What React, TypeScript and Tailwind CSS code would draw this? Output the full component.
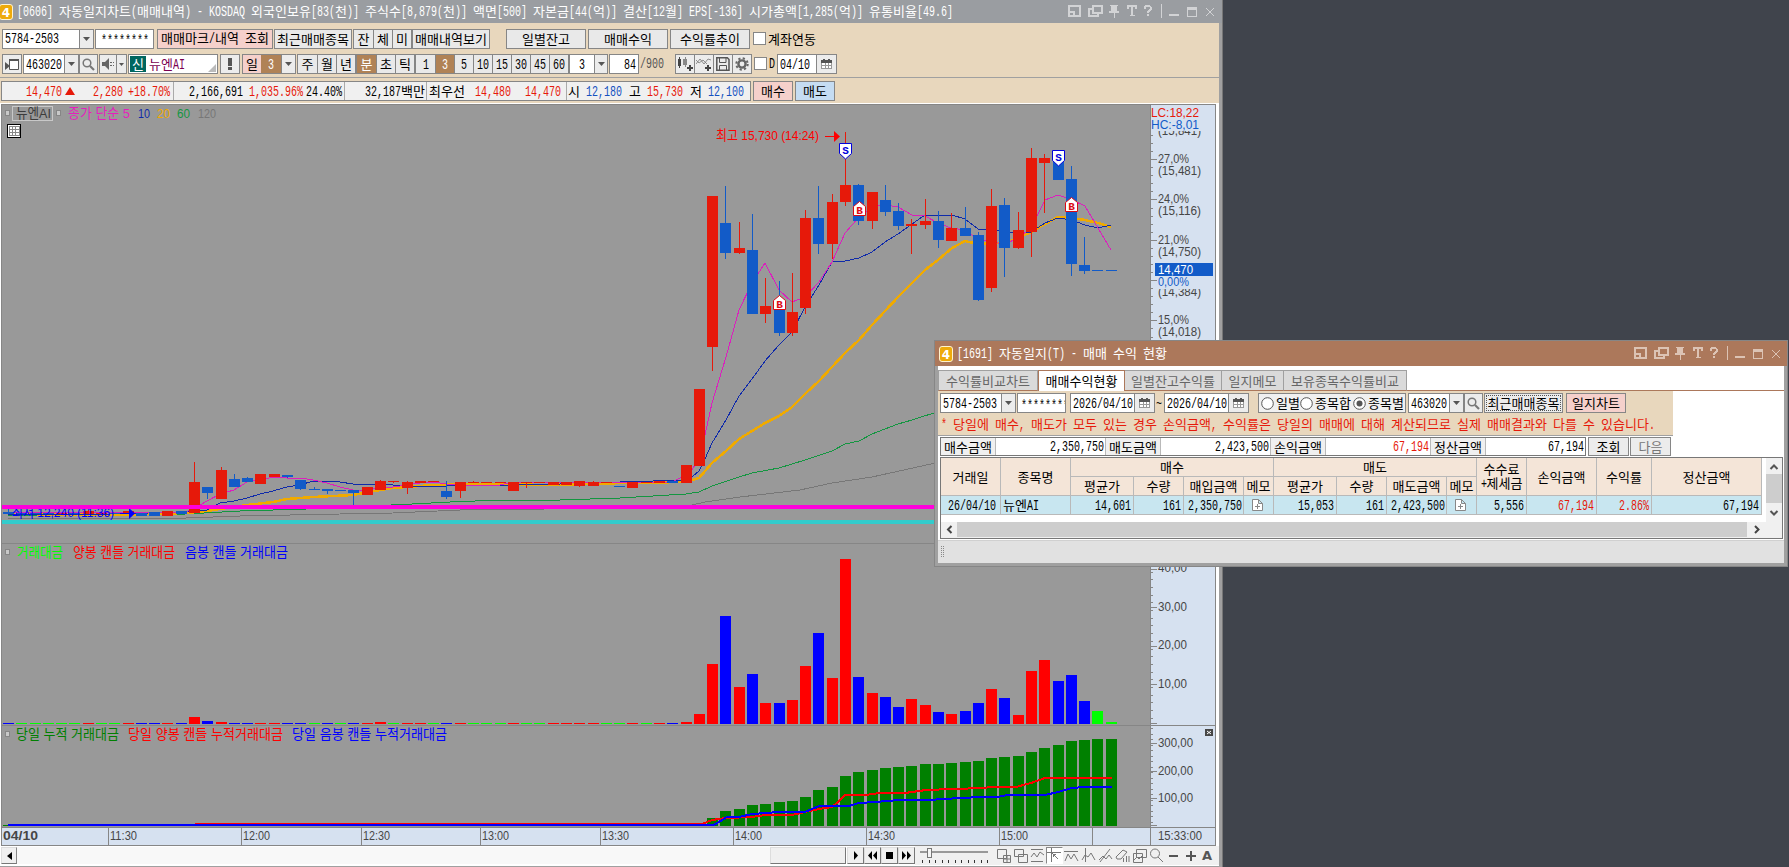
import { Fragment, type ReactNode } from "react";
import clsx from "clsx";

type Dir = "up" | "down";

const UP = "#e6190a";
const DOWN = "#125bc8";

const STEP = 13.285;
const cx = (i: number) => Math.round(8 + STEP * i);

// [direction, body top, body bottom, wick top, wick bottom]
const candles: [Dir, number, number, number, number][] = [
  ["down", 512, 514, 509, 514],
  ["down", 513, 514, 513, 514],
  ["down", 513, 514, 513, 514],
  ["down", 513, 514, 513, 514],
  ["up", 513, 514, 513, 514],
  ["down", 513, 514, 513, 514],
  ["up", 511, 514, 510, 514],
  ["up", 513, 514, 513, 514],
  ["down", 513, 514, 513, 514],
  ["up", 511, 514, 511, 514],
  ["down", 513, 516, 513, 516],
  ["down", 512, 516, 512, 516],
  ["up", 511, 516, 511, 516],
  ["down", 511, 514, 511, 514],
  ["up", 482, 513, 462, 513],
  ["down", 487, 493, 487, 499],
  ["up", 470, 499, 467, 499],
  ["down", 479, 487, 474, 487],
  ["down", 478, 482, 477, 482],
  ["up", 474, 484, 474, 484],
  ["up", 474, 477, 474, 477],
  ["down", 475, 477, 475, 478],
  ["down", 480, 489, 480, 490],
  ["down", 489, 490, 487, 490],
  ["down", 489, 491, 489, 494],
  ["down", 490, 491, 490, 491],
  ["down", 490, 493, 490, 505],
  ["up", 487, 495, 487, 495],
  ["up", 481, 490, 480, 490],
  ["up", 481, 482, 481, 483],
  ["up", 482, 488, 481, 494],
  ["up", 481, 483, 481, 483],
  ["up", 481, 482, 481, 482],
  ["down", 491, 497, 481, 499],
  ["up", 482, 491, 482, 498],
  ["up", 482, 483, 481, 483],
  ["up", 482, 483, 482, 483],
  ["up", 482, 483, 482, 483],
  ["up", 482, 491, 482, 491],
  ["up", 482, 483, 482, 488],
  ["up", 482, 483, 482, 483],
  ["up", 482, 485, 482, 485],
  ["up", 482, 485, 482, 485],
  ["up", 481, 486, 481, 487],
  ["up", 482, 486, 481, 486],
  ["up", 482, 483, 482, 483],
  ["down", 486, 487, 486, 487],
  ["up", 482, 488, 482, 488],
  ["up", 482, 483, 482, 483],
  ["up", 481, 483, 481, 483],
  ["down", 481, 483, 481, 483],
  ["up", 465, 483, 465, 483],
  ["up", 389, 466, 389, 466],
  ["up", 196, 347, 196, 371],
  ["down", 223, 253, 186, 259],
  ["up", 248, 253, 222, 254],
  ["down", 250, 314, 214, 314],
  ["up", 306, 314, 278, 323],
  ["down", 305, 333, 281, 336],
  ["up", 312, 333, 273, 336],
  ["up", 218, 308, 210, 314],
  ["down", 218, 244, 186, 254],
  ["up", 202, 244, 194, 259],
  ["up", 185, 202, 132, 206],
  ["down", 185, 221, 184, 225],
  ["up", 192, 221, 192, 229],
  ["down", 200, 212, 185, 216],
  ["down", 211, 226, 203, 230],
  ["up", 224, 226, 219, 254],
  ["up", 221, 225, 199, 229],
  ["down", 221, 240, 211, 248],
  ["up", 228, 241, 213, 241],
  ["down", 228, 236, 207, 236],
  ["down", 235, 300, 232, 301],
  ["up", 206, 288, 189, 292],
  ["down", 205, 248, 198, 277],
  ["up", 230, 248, 212, 249],
  ["up", 158, 232, 148, 257],
  ["up", 158, 163, 154, 213],
  ["down", 158, 180, 158, 180],
  ["down", 179, 264, 166, 276],
  ["down", 265, 271, 237, 274],
  ["down", 270, 271, 270, 271],
  ["down", 270, 271, 270, 271],
];

// r = rising, b = falling, g = unchanged
const volumeTone =
  "bgggggrggrbbrb" + "rbrbbrrbbgbgbrrgrrgbrgggrggrrrrggrgrb" + "rrrbrbrbrrbrrbrbbrrbrbbrbrrrbbbgg";
const volumeFill: Record<string, string> = { r: "#ff0000", b: "#0000ff", g: "#00ff00" };
const volumeTop: Record<number, number> = {
  14: 717, 15: 721, 16: 722, 28: 722, 51: 722, 52: 714, 53: 664, 54: 616, 55: 687, 56: 674,
  57: 703, 58: 703, 59: 700, 60: 666, 61: 633, 62: 678, 63: 559, 64: 677, 65: 693, 66: 697,
  67: 707, 68: 699, 69: 705, 70: 712, 71: 714, 72: 711, 73: 703, 74: 689, 75: 698, 76: 715,
  77: 671, 78: 660, 79: 681, 80: 675, 81: 701, 82: 711, 83: 722,
};

const cumulativeTop = [
  818, 811, 809, 805, 804, 802, 801, 797, 790, 787, 776, 772, 770, 768, 767, 766, 764, 764, 763,
  762, 761, 758, 757, 756, 752, 748, 745, 741, 740, 739, 739,
];

const ma = {
  ma5: "8,512 150,512 186,512 195,508 207,501 220,494 234,490 247,482 260,480 273,477 287,478 300,478 313,480 327,483 340,487 353,490 367,490 380,487 393,487 407,485 420,483 433,482 446,484 460,485 500,485 513,482 672,482 686,475 692,470 699,458 705,435 712,403 726,357 739,310 752,283 765,263 779,290 792,302 805,297 819,282 832,262 845,233 859,217 872,207 885,205 898,207 912,215 925,216 938,223 951,228 965,230 978,239 991,242 1005,244 1018,238 1031,228 1038,214 1045,200 1058,195 1072,200 1085,206 1098,228 1111,250",
  ma10: "8,515 110,514 186,512 207,510 220,503 234,501 247,498 260,494 273,491 287,487 300,485 313,481 340,482 353,484 390,484 393,485 407,486 446,486 460,485 513,485 526,484 560,484 580,482 620,482 686,480 692,477 699,471 705,459 712,443 726,420 739,396 752,379 765,361 779,345 792,332 805,307 819,285 832,262 845,261 859,258 872,252 885,242 898,234 912,224 925,215 938,216 952,215 965,219 978,229 991,229 1005,232 1018,233 1031,232 1045,223 1058,218 1072,220 1085,225 1098,228 1111,225",
  ma20: "8,514 120,515 186,513 207,511 220,509 247,505 273,502 287,499 313,497 353,495 380,490 393,488 407,487 433,485 460,484 513,484 540,485 600,484 620,483 686,482 699,478 712,463 726,451 739,439 752,431 765,423 779,416 792,407 805,394 819,381 832,367 845,353 859,340 872,325 885,311 898,297 912,283 925,270 938,260 952,248 965,241 978,244 991,243 1005,243 1018,238 1031,232 1045,224 1058,217 1072,218 1085,220 1098,223 1111,227",
  ma60: "8,516 100,515 186,514 240,511 307,509 412,504 450,502 500,500 560,500 620,498 686,494 699,492 712,486 739,477 752,473 779,468 805,460 832,451 845,444 859,441 872,434 898,424 912,420 940,411",
  ma120: "8,518 186,518 240,516 340,514 393,513 460,510 545,509 692,505 705,502 740,497 800,490 832,483 872,477 940,462",
};

const cumUp =
  "195,824 702,824 712,820 726,818 752,817 765,815 792,815 805,812 819,809 832,807 839,801 845,795 865,795 880,793 905,793 926,790 953,789 984,788 991,787 1016,787 1031,783 1045,778 1112,778";
const cumDown =
  "8,825 714,825 727,817 739,817 752,814 779,812 805,812 819,806 849,806 859,803 875,802 899,800 932,800 940,799 965,798 978,797 998,797 1007,795 1045,795 1058,792 1072,788 1085,787 1112,787";

const range = (n: number) => Array.from({ length: n }, (_, i) => i);

/* Fixed pitch text: 6px for a half width character, 12px for a full width one */
function G({ children, className }: { children: string; className?: string }) {
  const runs = children.match(/[\u3130-\ud7a3]+|[^\u3130-\ud7a3]+/g) ?? [];
  return (
    <span className={clsx("inline-flex shrink-0 whitespace-pre leading-4", className)}>
      {runs.map((run, i) =>
        /[\u3130-\ud7a3]/.test(run) ? (
          <span key={i} className="tracking-[0.04px]">
            {run}
          </span>
        ) : (
          <span key={i} className="inline-block" style={{ width: run.length * 6 }}>
            <span className="inline-block origin-left scale-x-[0.6452] font-['Liberation_Mono',monospace] text-[15.5px]">
              {run}
            </span>
          </span>
        ),
      )}
    </span>
  );
}

function Box({ className, children }: { className?: string; children?: ReactNode }) {
  return (
    <div
      className={clsx(
        "flex h-5 shrink-0 items-center justify-center overflow-hidden border border-[#868686]",
        className,
      )}
    >
      {children}
    </div>
  );
}

function Arrow({ className }: { className?: string }) {
  return (
    <div
      className={clsx(
        "flex h-full shrink-0 items-center justify-center border-l border-[#868686] bg-[#ececec]",
        className,
      )}
    >
      <svg width="7" height="4">
        <path d="M0 0h7L3.5 4z" fill="#555" />
      </svg>
    </div>
  );
}

function CalendarIcon() {
  return (
    <svg width="11" height="11" shapeRendering="crispEdges">
      <path d="M0 1h11v9H0z" fill="#fff" />
      <path d="M.5 4v6M10.500 4v6M0 9.500h11M4 4v6M7.500 4v6M1 6.500h9" fill="none" stroke="#999" />
      <path d="M0 1h11v3H0zM2 0h2v1H2zM7 0h2v1H7z" fill="#555" />
    </svg>
  );
}

function SearchIcon() {
  return (
    <svg width="13" height="13" fill="none" stroke="#777">
      <circle cx="5" cy="5" r="3.800" strokeWidth="1.500" />
      <path d="M8 8l4 4" strokeWidth="2.200" />
    </svg>
  );
}

function Toggle({ labels, active, widths }: { labels: string[]; active?: string; widths: string }) {
  return (
    <div className="flex h-5 shrink-0 border border-[#868686]">
      {labels.map((label, i) => (
        <div
          key={label}
          className={clsx(
            "flex items-center justify-center",
            widths,
            i > 0 && "border-l border-[#868686]",
            label === active ? "bg-[#b08256] text-white" : "bg-[#e9e9e9]",
          )}
        >
          <G>{label}</G>
        </div>
      ))}
    </div>
  );
}

function WindowButtons({ color }: { color: string }) {
  return (
    <svg width="148" height="16" fill="none" stroke={color} shapeRendering="crispEdges">
      <path d="M1 2h11v10H1zM1 8h5v4" strokeWidth="1.600" />
      <path d="M25 2h9v7h-9zM24 5h-3v7h9v-2" strokeWidth="1.500" />
      <path d="M42 1h8v1h-1v5h2v2h-4v5h-1v-5h-5V7h2V2h-1z" fill={color} stroke="none" />
      <path d="M59 1h10v4h-1.500l-.5-2h-2v8h1.500v1h-5v-1H63V3h-2l-.5 2H59z" fill={color} stroke="none" />
      <path d="M76.500 4.500V3l1.500-1.500h3L82.500 3v2.500L80 7.500V9M79 11h2" strokeWidth="2" />
      <path d="M93.500 0v14" />
      <path d="M101 11h10" strokeWidth="2" />
      <path d="M119.500 3v9h9V3" />
      <path d="M119 4h10" strokeWidth="3" />
      <path d="M138 4l8 8M146 4l-8 8" shapeRendering="auto" />
    </svg>
  );
}

function TitleIcon() {
  return (
    <svg width="14" height="16" className="shrink-0">
      <rect x=".5" y=".5" width="13" height="15" rx="2.500" fill="#eeaa0a" stroke="#fff3d0" />
      <text
        x="7"
        y="12.500"
        textAnchor="middle"
        fill="#fff"
        className="font-['DejaVu_Sans',sans-serif] text-[12px] font-bold"
      >
        4
      </text>
    </svg>
  );
}

function Toolbar() {
  const btn = "bg-[#e9e9e9]";
  return (
    <div className="h-20 w-[1219px] bg-[#e8d7bd] text-black">
      <div className="flex h-[31px] items-center pl-[2px]">
        <Box className="w-[92px] justify-between! bg-white">
          <G className="pl-[2px]">5784-2503</G>
          <Arrow className="w-[14px]" />
        </Box>
        <Box className="ml-px w-[59px] bg-white pt-1">
          <G>********</G>
        </Box>
        <Box className="ml-[3px] w-[116px] bg-[#f5d0cb]">
          <G>매매마크/내역 조회</G>
        </Box>
        <Box className={clsx("ml-px w-[78px]", btn)}>
          <G>최근매매종목</G>
        </Box>
        <div className="ml-px">
          <Toggle labels={["잔", "체", "미"]} widths="w-[19px]" />
        </div>
        <Box className={clsx("w-[78px]", btn)}>
          <G>매매내역보기</G>
        </Box>
        <Box className={clsx("ml-[16px] w-[80px]", btn)}>
          <G>일별잔고</G>
        </Box>
        <Box className={clsx("ml-[2px] w-[80px]", btn)}>
          <G>매매수익</G>
        </Box>
        <Box className={clsx("ml-[2px] w-[80px]", btn)}>
          <G>수익률추이</G>
        </Box>
        <div className="ml-[3px] mr-[2px] size-[13px] border border-[#868686] bg-white" />
        <G>계좌연동</G>
      </div>

      <div className="flex h-[23px] items-end pb-[3px] pl-[2px]">
        <Box className="w-5 bg-[#ececec]">
          <svg width="14" height="13">
            <path d="M4.500 1.500h9v10h-9z" fill="#fff" stroke="#555" />
            <path d="M4 1h10v2H4zM0 4l5 4-5 4z" fill="#555" />
          </svg>
        </Box>
        <Box className="ml-px w-[56px] justify-between! bg-white">
          <G className="pl-[2px]">463020</G>
          <Arrow className="w-[14px]" />
        </Box>
        <Box className="w-[19px] bg-[#ececec]">
          <SearchIcon />
        </Box>
        <Box className="ml-px w-[18px] bg-[#ececec]">
          <svg width="13" height="12" fill="#666">
            <path d="M0 4h3l4-4v12L3 8H0z" />
            <path d="M8 4h2v1H8zM11 4h1v1h-1zM8 7h2v1H8zM11 7h1v1h-1z" />
          </svg>
        </Box>
        <Box className="-ml-px w-[11px] bg-[#ececec]">
          <svg width="5" height="3">
            <path d="M0 0h5L2.500 3z" fill="#555" />
          </svg>
        </Box>
        <Box className="relative ml-px w-[90px] justify-start! bg-white pl-px">
          <span className="flex h-4 w-4 items-center justify-center bg-[#00665f] text-white">
            <G>신</G>
          </span>
          <G className="pl-[3px] text-[#7a0050]">뉴엔AI</G>
          <svg width="8" height="8" className="absolute right-px bottom-px">
            <path d="M8 0v8H0z" fill="#bbb" />
          </svg>
        </Box>
        <Box className="ml-[2px] w-5 bg-[#ececec]">
          <svg width="4" height="12" fill="#555">
            <path d="M0 0h4v8H0zM0 9h4v3H0z" />
          </svg>
        </Box>
        <Box className="ml-[2px] w-[54px]">
          <span className="flex h-full w-[18px] items-center justify-center bg-[#f5d0cb]">
            <G>일</G>
          </span>
          <span className="flex h-full w-5 items-center justify-center bg-[#b08256] text-white">
            <G>3</G>
          </span>
          <Arrow className="w-[14px]" />
        </Box>
        <div className="ml-px">
          <Toggle labels={["주", "월", "년"]} widths="w-[19px]" />
        </div>
        <Toggle labels={["분", "초", "틱"]} active="분" widths="w-[19px]" />
        <Toggle
          labels={["1", "3", "5", "10", "15", "30", "45", "60"]}
          active="3"
          widths="w-[19px]"
        />
        <Box className="w-[39px] bg-white">
          <G className="flex-1 justify-center">3</G>
          <Arrow className="w-[13px]" />
        </Box>
        <Box className="ml-px w-[30px] justify-end! bg-white pr-[2px]">
          <G>84</G>
        </Box>
        <G className="mb-[2px] ml-px text-[#555]">/900</G>
        <div className="ml-[11px] flex">
          <Box className="w-5 bg-[#ececec]">
            <svg width="16" height="15" fill="#444">
              <path d="M1 2h3v7H1zM2 0h1v11H2z" />
              <path d="M6 2h4v6H6zM8 0h1v10H8z" fill="#888" />
              <path d="M12 8h2v2h2v2h-2v2h-2v-2h-2v-2h2z" />
            </svg>
          </Box>
          <Box className="-ml-px w-5 bg-[#ececec]">
            <svg width="16" height="15" fill="none" stroke="#777">
              <path d="M0 7l4-5 4 5 4-5 3 1M0 3l3 3 4-3 4 4" strokeWidth=".8" />
              <path d="M12 8v6M9 11h6" stroke="#444" strokeWidth="2" />
            </svg>
          </Box>
          <Box className="-ml-px w-5 bg-[#ececec]">
            <svg width="14" height="14" fill="none" stroke="#555">
              <path d="M.8.8h10.500L13 2.500v10.700H.8z" strokeWidth="1.500" />
              <path d="M3.500 1v4.500h6.500V1M3.500 13V8.500h7V13" />
            </svg>
          </Box>
          <Box className="-ml-px w-5 bg-[#ececec]">
            <svg width="14" height="14" fill="none" stroke="#666">
              <circle cx="7" cy="7" r="3.600" strokeWidth="2.400" />
              <circle cx="7" cy="7" r="5.700" strokeWidth="2" strokeDasharray="2.200 2.280" />
            </svg>
          </Box>
        </div>
        <div className="mr-[2px] mb-[4px] ml-[2px] size-[13px] border border-[#868686] bg-white" />
        <G className="mb-[2px] w-[8px]">D</G>
        <Box className="w-[60px] justify-between! bg-white">
          <G className="pl-[2px]">04/10</G>
          <span className="flex h-full w-[20px] items-center justify-center border-l border-[#868686] bg-[#ececec]">
            <CalendarIcon />
          </span>
        </Box>
      </div>

      <div className="h-px bg-[#a0a0a0]" />

      <div className="mt-[3px] flex pl-px">
        <div className="flex h-5 w-[750px] items-center border border-[#868686] bg-[#f0f0f0] text-[#e6190a]">
          <div className="flex h-full w-[172px] items-center border-r border-[#aaa]">
            <G className="w-[60px] justify-end">14,470</G>
            <svg width="10" height="8" className="ml-[3px]">
              <path d="M5 0l5 8H0z" fill={UP} />
            </svg>
            <G className="ml-[18px]">2,280</G>
            <G className="ml-[5px]">+18.70%</G>
          </div>
          <div className="flex h-full w-[171px] items-center border-r border-[#aaa]">
            <G className="ml-[15px] text-black">2,166,691</G>
            <G className="ml-[6px]">1,035.96%</G>
            <G className="ml-[3px] text-black">24.40%</G>
          </div>
          <div className="flex h-full w-[82px] items-center justify-end border-r border-[#aaa] pr-px text-black">
            <G>32,187백만</G>
          </div>
          <div className="flex h-full w-[140px] items-center border-r border-[#aaa] pl-[2px]">
            <G className="text-black">최우선</G>
            <G className="ml-[10px]">14,480</G>
            <G className="ml-[14px]">14,470</G>
          </div>
          <G className="ml-px text-black">시</G>
          <G className="ml-[6px] text-[#1450c0]">12,180</G>
          <G className="ml-[7px] text-black">고</G>
          <G className="ml-[6px]">15,730</G>
          <G className="ml-[7px] text-black">저</G>
          <G className="ml-[6px] text-[#1450c0]">12,100</G>
        </div>
        <Box className="ml-[2px] w-[40px] bg-[#f5d0cb]">
          <G>매수</G>
        </Box>
        <Box className="ml-[2px] w-[40px] bg-[#c5dcf2]">
          <G>매도</G>
        </Box>
      </div>
    </div>
  );
}

interface LabelProps {
  x: number;
  y: number;
  w: number;
  fill?: string;
  bold?: boolean;
  children: string;
}

function Label({ x, y, w, fill = "#464646", bold, children }: LabelProps) {
  return (
    <text
      x={x}
      y={y}
      fill={fill}
      textLength={w}
      lengthAdjust="spacingAndGlyphs"
      fontWeight={bold ? 700 : undefined}
    >
      {children}
    </text>
  );
}

function Marker({ x, y, side }: { x: number; y: number; side: "B" | "S" }) {
  const buy = side === "B";
  const color = buy ? "#dc0a14" : "#0000dc";
  return (
    <g transform={`translate(${x} ${y})`}>
      <path
        d={buy ? "M.5 5.500L6.500.5l6 5v9H.5z" : "M.5.5h12v10l-6 5.500-6-5.500z"}
        fill="#fff"
        stroke={color}
      />
      <text
        x="6.500"
        y={buy ? 13 : 11}
        textAnchor="middle"
        fill={color}
        className="font-['Liberation_Mono',monospace] text-[11px] font-bold"
      >
        {side}
      </text>
    </g>
  );
}

function Chart() {
  const percents: [number, string, string][] = [
    [159, "27,0%", "(15,481)"],
    [199, "24,0%", "(15,116)"],
    [240, "21,0%", "(14,750)"],
    [320, "15,0%", "(14,018)"],
  ];
  const times: [number, string][] = [
    [108, "11:30"],
    [241, "12:00"],
    [361, "12:30"],
    [480, "13:00"],
    [600, "13:30"],
    [733, "14:00"],
    [866, "14:30"],
    [999, "15:00"],
  ];
  const maLines: [string, string, number][] = [
    [ma.ma120, "#777777", 1],
    [ma.ma60, "#149641", 1],
    [ma.ma20, "#f0aa00", 2.500],
    [ma.ma10, "#0f2aaa", 1],
    [ma.ma5, "#dc1ebe", 1],
  ];

  return (
    <svg
      width="1219"
      height="743"
      viewBox="0 103 1219 743"
      className="block bg-white font-['Liberation_Sans','Noto_Sans_CJK_KR',sans-serif] text-[13.5px]"
    >
      <defs>
        <clipPath id="topLabel">
          <rect x="1151" y="131" width="60" height="10" />
        </clipPath>
        <clipPath id="midLabel">
          <rect x="1151" y="289" width="60" height="14" />
        </clipPath>
      </defs>
      <g shapeRendering="crispEdges">
        <rect x="1" y="104" width="1215" height="742" fill="#868686" />
        <rect x="2" y="105" width="1148" height="722" fill="#999999" />
        <rect x="1151" y="105" width="64" height="722" fill="#d6e1f0" />
        <rect x="2" y="828" width="1213" height="17" fill="#d6e1f0" />
        <rect x="2" y="543" width="1213" height="1" fill="#868686" />
        <rect x="2" y="725" width="1213" height="1" fill="#868686" />
      </g>

      {maLines.map(([points, stroke, width]) => (
        <polyline
          key={stroke}
          points={points}
          fill="none"
          stroke={stroke}
          strokeWidth={width}
          shapeRendering="crispEdges"
        />
      ))}

      <g shapeRendering="crispEdges">
        {candles.map(([dir, top, bottom, high, low], i) => (
          <g key={i} fill={dir === "up" ? UP : DOWN}>
            <rect x={cx(i)} y={high} width="1" height={low - high} />
            <rect x={cx(i) - 5} y={top} width="11" height={bottom - top} />
          </g>
        ))}
      </g>

      <Label x={12} y={517} w={102} fill="#0000ff">
        최저 12,240 (11:36)
      </Label>
      <path d="M120 513.500h10" stroke="#0000ff" />
      <path d="M129 508l6 5.500-6 5.500z" fill="#0000ff" />
      <rect x="2" y="505" width="1148" height="4" fill="#ff00dc" />
      <rect x="2" y="520" width="1148" height="4" fill="#33cccc" />

      <Label x={716} y={140} w={103} fill="#ff0000">
        최고 15,730 (14:24)
      </Label>
      <path d="M825 136.500h10" stroke="#ff0000" />
      <path d="M834 131l6 5.500-6 5.500z" fill="#ff0000" />

      <Marker x={839} y={143} side="S" />
      <Marker x={853} y={201} side="B" />
      <Marker x={773} y={295} side="B" />
      <Marker x={1052} y={150} side="S" />
      <Marker x={1065} y={197} side="B" />

      {/* legends */}
      <g fill="#c8c8c8" stroke="#868686">
        <rect x="5.500" y="110.500" width="4" height="5" />
        <rect x="56.500" y="110.500" width="4" height="5" />
        <rect x="5.500" y="549.500" width="4" height="5" />
        <rect x="5.500" y="731.500" width="4" height="5" />
        <rect x="12.500" y="106.500" width="40" height="14" fill="none" stroke="#c8c8c8" />
      </g>
      <Label x={16} y={118} w={35} fill="#3c3c3c">
        뉴엔AI
      </Label>
      <Label x={68} y={118} w={62} fill="#e61ebe">
        종가 단순 5
      </Label>
      <Label x={138} y={118} w={12} fill="#0f2aaa">
        10
      </Label>
      <Label x={157} y={118} w={13} fill="#f0aa00">
        20
      </Label>
      <Label x={177} y={118} w={13} fill="#149641">
        60
      </Label>
      <Label x={198} y={118} w={18} fill="#777">
        120
      </Label>
      <g shapeRendering="crispEdges">
        <rect x="7.500" y="124.500" width="13" height="13" fill="#fff" stroke="#000" />
        <path d="M9 126.500h10v9H9zM9 129.500h10M9 132.500h10M12.500 127v9M15.500 127v9" fill="none" stroke="#888" />
      </g>

      <Label x={17} y={557} w={46} fill="#00ff00">
        거래대금
      </Label>
      <Label x={73} y={557} w={102} fill="#ff0000">
        양봉 캔들 거래대금
      </Label>
      <Label x={185} y={557} w={103} fill="#0000ff">
        음봉 캔들 거래대금
      </Label>

      <Label x={16} y={739} w={103} fill="#008000">
        당일 누적 거래대금
      </Label>
      <Label x={128} y={739} w={155} fill="#ff0000">
        당일 양봉 캔들 누적거래대금
      </Label>
      <Label x={292} y={739} w={155} fill="#0000ff">
        당일 음봉 캔들 누적거래대금
      </Label>

      {/* trading value and accumulated value */}
      <g shapeRendering="crispEdges">
        {volumeTone.split("").map((tone, i) => {
          const top = volumeTop[i] ?? 723;
          return (
            <rect
              key={i}
              x={cx(i) - 5}
              y={top}
              width="11"
              height={724 - top}
              fill={volumeFill[tone]}
            />
          );
        })}
        {cumulativeTop.map((top, i) => (
          <rect key={i} x={cx(i + 53) - 5} y={top} width="11" height={826 - top} fill="#008000" />
        ))}
        <rect x="3" y="825" width="6" height="1" fill="#008000" />
        <polyline points={cumUp} fill="none" stroke="#ff0000" strokeWidth="2" />
        <polyline points={cumDown} fill="none" stroke="#0000ff" strokeWidth="2" />
      </g>

      {/* right axis */}
      <g fill="#868686" shapeRendering="crispEdges">
        {range(26).map((i) => (
          <rect key={i} x="1151" y={Math.round(135 + i * 8.06)} width="2" height="1" />
        ))}
        {[159, 199, 240, 280, 320, 569, 607, 646, 684, 723, 743, 771, 798, 825].map((y) => (
          <rect key={y} x="1151" y={y} width="6" height="1" />
        ))}
        {range(20).map((i) => (
          <rect key={i} x="1151" y={Math.round(571.500 + i * 7.700)} width="2" height="1" />
        ))}
        {range(18).map((i) => (
          <rect key={i} x="1151" y={Math.round(728 + i * 5.500)} width="2" height="1" />
        ))}
      </g>
      <Label x={1151} y={117} w={48} fill={UP}>
        LC:18,22
      </Label>
      <Label x={1151} y={129} w={48} fill={DOWN}>
        HC:-8,01
      </Label>
      <g clipPath="url(#topLabel)">
        <Label x={1158} y={135} w={43}>
          (15,841)
        </Label>
      </g>
      {percents.map(([y, percent, price]) => (
        <Fragment key={y}>
          <Label x={1158} y={y + 4} w={31}>
            {percent}
          </Label>
          <Label x={1158} y={y + 16} w={43}>
            {price}
          </Label>
        </Fragment>
      ))}
      <rect x="1155" y="263" width="58" height="13" fill={DOWN} />
      <Label x={1158} y={274} w={35} fill="#ffffff">
        14,470
      </Label>
      <Label x={1158} y={286} w={31} fill={DOWN}>
        0,00%
      </Label>
      <g clipPath="url(#midLabel)">
        <Label x={1158} y={296} w={43}>
          (14,384)
        </Label>
      </g>
      {["40,00", "30,00", "20,00", "10,00"].map((t, i) => (
        <Label key={t} x={1158} y={Math.round(572 + i * 38.500)} w={29}>
          {t}
        </Label>
      ))}
      {["300,00", "200,00", "100,00"].map((t, i) => (
        <Label key={t} x={1158} y={747 + i * 27.500} w={35}>
          {t}
        </Label>
      ))}
      <rect x="1205" y="729" width="8" height="7" fill="#464646" />
      <path d="M1207 731l4 3M1211 731l-4 3" stroke="#fff" />

      {/* time axis */}
      <Label x={3} y={840} w={35} bold>
        04/10
      </Label>
      {times.map(([x, t]) => (
        <Fragment key={t}>
          <rect x={x} y="828" width="1" height="17" fill="#868686" />
          <Label x={x + 2} y={840} w={27}>
            {t}
          </Label>
        </Fragment>
      ))}
      <rect x="1092" y="828" width="1" height="17" fill="#868686" />
      <rect x="1150" y="828" width="1" height="17" fill="#868686" />
      <Label x={1158} y={840} w={44}>
        15:33:00
      </Label>
    </svg>
  );
}

function PlayButton({ d }: { d: string }) {
  return (
    <div className="flex h-[17px] w-[17px] shrink-0 items-center justify-center border border-t-[#ddd] border-r-[#777] border-b-[#777] border-l-[#ddd] bg-[#f0f0f0]">
      <svg width="9" height="9">
        <path d={d} />
      </svg>
    </div>
  );
}

const drawTools = [
  "M1.500 1.500h9v9h-9zM7.500 7.500h7v7h-7zM11 7v7M7 11h7",
  "M1.500 1.500h9v7h-9zM5.500 6.500h9v8h-9z",
  "M1 1.500h12M1 13.500h12M1 9l3-4 3 4 3-5 4 3",
  "M0 4.500h14M4.500 0v14M5 5l6 6M6.500 9V6.500H9",
  "M0 3.500h14M1 13l3-7 3 5 3-5 4 7",
  "M4.500 0v14M1 12l3-5 3 2 3-4 4 7",
  "M2 14L12 1M1 12l4-4 3 3 3-4 3 4",
  "M1 9l7-7 4 2-6 7H2zM8.500 14v-4M11.500 14V8M14 14V8",
  "M4.500 1.500h10v8h-10zM1.500 5.500h9v9h-9zM2 12l3-3 2 2 3-3",
  "M6 1a4.500 4.500 0 100 9 4.500 4.500 0 000-9M9 9l5 5",
];

function BottomBar() {
  return (
    <div className="flex h-[19px] w-[1219px] items-center bg-white">
      <div className="ml-px flex h-[17px] w-4 shrink-0 items-center justify-center border border-t-[#ddd] border-r-[#888] border-b-[#777] border-l-[#ddd] bg-[#f0f0f0]">
        <svg width="5" height="8">
          <path d="M5 0v8L0 4z" />
        </svg>
      </div>
      <div className="h-[17px] w-[753px] shrink-0 bg-[#f8f8f8]" />
      <div className="mr-px h-[17px] w-[76px] shrink-0 border border-t-[#ddd] border-r-[#777] border-b-[#777] border-l-[#ddd] bg-[#f0f0f0]" />
      <PlayButton d="M3 0v9l4-4.500z" />
      <PlayButton d="M4 0v9L0 4.500zM9 0v9L5 4.500z" />
      <PlayButton d="M1 1h7v7H1z" />
      <PlayButton d="M0 0v9l4-4.500zM5 0v9l4-4.500z" />
      <div className="flex h-full flex-1 items-center bg-[#f0f0f0]">
        <svg width="78" height="17" shapeRendering="crispEdges">
          <rect x="5" y="4" width="68" height="2" fill="#999" />
          <rect x="12" y="1" width="4" height="9" fill="#f5f5f5" stroke="#777" />
          {range(11).map((i) => (
            <rect key={i} x={Math.round(7 + i * 6.500)} y="13" width="1" height="3" fill="#333" />
          ))}
        </svg>
        <div className="ml-[2px] flex">
          {drawTools.map((d, i) => (
            <div
              key={d}
              className={clsx(
                "flex h-[17px] w-[17px] items-center justify-center",
                i === 3 && "border border-t-[#888] border-r-white border-b-white border-l-[#888] bg-white",
              )}
            >
              <svg width="15" height="15" fill="none" stroke="#777" className="shrink-0">
                <path d={d} />
              </svg>
            </div>
          ))}
        </div>
        <svg width="37" height="15" fill="none" stroke="#555" strokeWidth="2">
          <path d="M4 8h9M21 8h10M26 3v10" />
        </svg>
        <span className="font-['DejaVu_Sans',sans-serif] text-[13px] font-bold text-[#555]">A</span>
      </div>
    </div>
  );
}

function ChartWindow() {
  return (
    <div className="h-[867px] w-[1223px] border-r border-[#777] bg-[#a0a0a0]">
      <div className="flex h-[23px] items-center bg-[#9a9da1] text-white">
        <div className="-ml-px">
          <TitleIcon />
        </div>
        <G className="ml-[4px] w-[1051px]">
          [0606] 자동일지차트(매매내역) - KOSDAQ 외국인보유[83(천)] 주식수[8,879(천)] 액면[500] 자본금[44(억)] 결산[12월] EPS[-136] 시가총액[1,285(억)] 유통비율[49.6]
        </G>
        <WindowButtons color="#d2d3d5" />
      </div>
      <Toolbar />
      <Chart />
      <BottomBar />
      <div className="h-px w-[1219px] bg-white" />
    </div>
  );
}

function Tab({ label, active, className }: { label: string; active?: boolean; className: string }) {
  return (
    <div
      className={clsx(
        "flex h-[21px] items-center justify-center border-t border-r",
        active
          ? "border-l border-[#ac785b] bg-white text-black"
          : "border-b border-[#a0a0a0] border-b-[#ac785b] bg-[#dadada] text-[#666]",
        className,
      )}
    >
      <G>{label}</G>
    </div>
  );
}

function Radio({ checked }: { checked?: boolean }) {
  return (
    <svg width="13" height="13" className="shrink-0">
      <circle cx="6.500" cy="6.500" r="5.800" fill="#fff" stroke="#555" />
      {checked && <circle cx="6.500" cy="6.500" r="3" fill="#555" />}
    </svg>
  );
}

function DateBox({ value, className }: { value: string; className?: string }) {
  return (
    <Box className={clsx("w-[85px] justify-between! bg-white", className)}>
      <G className="pl-[2px]">{value}</G>
      <span className="flex h-full w-[20px] items-center justify-center border-l border-[#868686] bg-[#ececec]">
        <CalendarIcon />
      </span>
    </Box>
  );
}

const summary = [
  { label: "매수금액", value: "2,350,750", labelW: "w-[55px]", valueW: "w-[110px]" },
  { label: "매도금액", value: "2,423,500", labelW: "w-[55px]", valueW: "w-[110px]" },
  { label: "손익금액", value: "67,194", labelW: "w-[55px]", valueW: "w-[105px]", red: true },
  { label: "정산금액", value: "67,194", labelW: "w-[55px]", valueW: "w-[99px]" },
];

const head = "flex items-center justify-center border-r border-b border-[#b9b9b9] bg-[#f4e5d8]";
const cell = "flex items-center justify-end border-r border-b border-[#b9b9b9] bg-[#c8e6f0] pr-[2px]";

function NoteIcon() {
  return (
    <svg width="12" height="12" fill="#fff" stroke="#888">
      <path d="M.5.5h6l4 4v7H.5zM6.500.5v4h4M5.500 5v5M3 7.500h5" />
    </svg>
  );
}

function ProfitTable() {
  return (
    <div className="mt-px ml-[2px] flex h-[82px] w-[843px] flex-col border border-[#777] bg-white">
      <div className="flex h-[64px]">
        <div className="grid h-[57px] grid-cols-[60px_70px_63px_50px_60px_30px_63px_50px_60px_30px_50px_70px_55px_110px] grid-rows-[19px_19px_19px]">
          <div className={clsx(head, "row-span-2")}><G>거래일</G></div>
          <div className={clsx(head, "row-span-2")}><G>종목명</G></div>
          <div className={clsx(head, "col-span-4")}><G>매수</G></div>
          <div className={clsx(head, "col-span-4")}><G>매도</G></div>
          <div className={clsx(head, "row-span-2 flex-col")}>
            <G className="-mb-[2px]">수수료</G>
            <G>+제세금</G>
          </div>
          <div className={clsx(head, "row-span-2")}><G>손익금액</G></div>
          <div className={clsx(head, "row-span-2")}><G>수익률</G></div>
          <div className={clsx(head, "row-span-2")}><G>정산금액</G></div>
          {["평균가", "수량", "매입금액", "메모", "평균가", "수량", "매도금액", "메모"].map((h, i) => (
            <div key={i} className={head}>
              <G>{h}</G>
            </div>
          ))}
          <div className={clsx(cell, "pr-[4px]!")}><G>26/04/10</G></div>
          <div className={clsx(cell, "justify-start! pl-[2px]")}><G>뉴엔AI</G></div>
          <div className={cell}><G>14,601</G></div>
          <div className={cell}><G>161</G></div>
          <div className={clsx(cell, "pr-px!")}><G>2,350,750</G></div>
          <div className={clsx(cell, "justify-center!")}><NoteIcon /></div>
          <div className={cell}><G>15,053</G></div>
          <div className={cell}><G>161</G></div>
          <div className={clsx(cell, "pr-px!")}><G>2,423,500</G></div>
          <div className={clsx(cell, "justify-center!")}><NoteIcon /></div>
          <div className={cell}><G>5,556</G></div>
          <div className={clsx(cell, "text-[#e6190a]")}><G>67,194</G></div>
          <div className={clsx(cell, "text-[#e6190a]")}><G>2.86%</G></div>
          <div className={cell}><G>67,194</G></div>
        </div>
        <div className="ml-auto flex h-full w-4 flex-col items-center justify-between bg-[#f0f0f0]">
          <svg width="16" height="16" fill="none" stroke="#555" strokeWidth="2">
            <path d="M4.500 11L8 7.500l3.500 3.500" />
          </svg>
          <div className="h-[29px] w-4 bg-[#cdcdcd]" />
          <svg width="16" height="19" fill="none" stroke="#555" strokeWidth="2">
            <path d="M4.500 8L8 11.500 11.500 8" />
          </svg>
        </div>
      </div>
      <div className="flex h-4 bg-[#f0f0f0]">
        <svg width="16" height="15" fill="none" stroke="#444" strokeWidth="2">
          <path d="M10.500 4L7 7.500l3.500 3.500" />
        </svg>
        <div className="h-[15px] w-[790px] bg-[#cdcdcd]" />
        <svg width="20" height="15" fill="none" stroke="#444" strokeWidth="2">
          <path d="M8 4l3.500 3.500L8 11" />
        </svg>
      </div>
    </div>
  );
}

function ProfitWindow() {
  return (
    <div className="absolute top-[340px] left-[934px] flex h-[227px] w-[854px] flex-col border border-[#868686] bg-[#a0a0a0] text-black">
      <div className="flex h-[25px] shrink-0 items-center bg-[#ac785b] pl-[4px] text-white">
        <TitleIcon />
        <G className="ml-[4px] w-[677px]">[1691] 자동일지(T) - 매매 수익 현황</G>
        <WindowButtons color="#dcc3b4" />
      </div>
      <div className="ml-[3px] flex h-[197px] w-[846px] flex-col bg-white">
        <div className="flex h-[25px] items-end border-b border-[#ac785b]">
          <div className="-mb-px flex">
            <Tab label="수익률비교차트" className="w-[100px] border-l" />
            <Tab label="매매수익현황" active className="w-[87px]" />
            <Tab label="일별잔고수익률" className="w-[97px]" />
            <Tab label="일지메모" className="w-[62px]" />
            <Tab label="보유종목수익률비교" className="w-[123px]" />
          </div>
        </div>

        <div className="h-[45px] w-[735px] border-b border-[#a0a0a0] bg-[#e8d7bd] pt-[2px]">
          <div className="flex pl-[2px]">
            <Box className="w-[76px] justify-between! bg-white">
              <G className="pl-[2px]">5784-2503</G>
              <Arrow className="w-[14px]" />
            </Box>
            <Box className="ml-px w-[49px] justify-start! bg-white pt-1 pl-[3px]">
              <G>********</G>
            </Box>
            <DateBox value="2026/04/10" className="ml-[4px]" />
            <G className="mx-px mt-[2px] w-[7px]">~</G>
            <DateBox value="2026/04/10" />
            <Box className="ml-[9px] w-[148px] justify-start! bg-[#f0f0f0] pl-[2px]">
              <Radio />
              <G className="ml-[2px]">일별</G>
              <Radio />
              <G className="ml-[2px]">종목합</G>
              <span className="ml-[2px]">
                <Radio checked />
              </span>
              <G className="ml-[2px]">종목별</G>
            </Box>
            <Box className="ml-[2px] w-[56px] justify-between! bg-white">
              <G className="pl-[2px]">463020</G>
              <Arrow className="w-[14px]" />
            </Box>
            <Box className="w-[19px] bg-[#ececec]">
              <SearchIcon />
            </Box>
            <Box className="ml-px w-[79px] bg-[#ececec] p-px">
              <span className="flex h-full w-full items-center justify-center border border-dotted border-[#555]">
                <G>최근매매종목</G>
              </span>
            </Box>
            <Box className="ml-[3px] w-[60px] bg-[#f5d0cb]">
              <G>일지차트</G>
            </Box>
          </div>
          <div className="mt-[3px] flex pl-[3px] text-[#e6190a]">
            <G>* 당일에 매수, 매도가 모두 있는 경우 손익금액, 수익률은 당일의 매매에 대해 계산되므로 실제 매매결과와 다를 수 있습니다.</G>
          </div>
        </div>

        <div className="mt-px flex pl-[2px]">
          <div className="flex h-[19px] w-[646px] border border-[#777]">
            {summary.map((s) => (
              <Fragment key={s.label}>
                <div
                  className={clsx(
                    "flex items-center justify-center border-r border-[#b9b9b9] bg-[#f0f0f0]",
                    s.labelW,
                  )}
                >
                  <G>{s.label}</G>
                </div>
                <div
                  className={clsx(
                    "flex items-center justify-end bg-white pr-px",
                    s.valueW,
                    s.label !== "정산금액" && "border-r border-[#b9b9b9]",
                    s.red && "text-[#e6190a]",
                  )}
                >
                  <G>{s.value}</G>
                </div>
              </Fragment>
            ))}
          </div>
          <Box className="ml-[2px] h-[19px] w-[41px] bg-[#ececec]">
            <G>조회</G>
          </Box>
          <Box className="ml-px h-[19px] w-[41px] bg-[#ececec] text-[#777]">
            <G>다음</G>
          </Box>
        </div>

        <ProfitTable />

        <div className="mt-px flex flex-1 items-start border-t border-[#d0d0d0] bg-[#e1e1e1] pt-[5px] pl-[3px]">
          <svg width="4" height="12" fill="#888">
            {range(6).map((i) => (
              <path key={i} d={`M0 ${i * 2}h1v1H0zM2 ${i * 2}h1v1H2z`} />
            ))}
          </svg>
        </div>
      </div>
    </div>
  );
}

export default function App() {
  return (
    <div className="relative h-[867px] w-[1789px] overflow-hidden bg-[#40444c] font-['Noto_Sans_CJK_KR',sans-serif] text-[13px] leading-4 font-normal">
      <ChartWindow />
      <ProfitWindow />
    </div>
  );
}
